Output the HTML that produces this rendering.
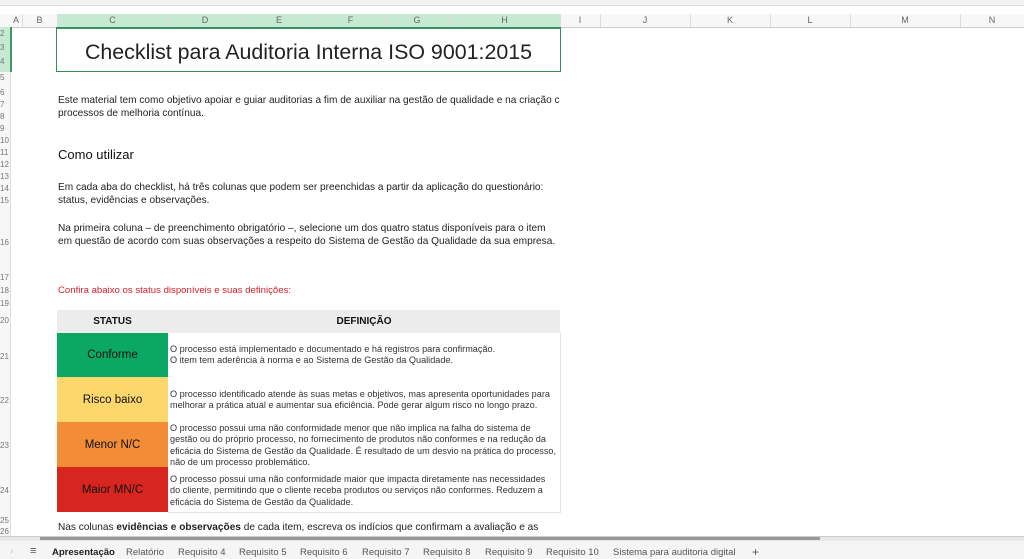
<html><head><style>
body{margin:0;width:1024px;height:559px;overflow:hidden;background:#fff;font-family:"Liberation Sans",sans-serif;position:relative}
.a{position:absolute;white-space:nowrap}
.ch{position:absolute;top:14px;height:13px;font-size:9px;color:#666;text-align:center;line-height:13px;border-right:1px solid #ddd}
.rn{position:absolute;left:0;width:9px;font-size:8px;color:#777;line-height:10px}
.t{font-size:10.1px;color:#222}
.d{font-size:9.15px;color:#333;line-height:11.3px;position:absolute;left:170px;white-space:nowrap}
.s{position:absolute;left:57px;width:111px;font-size:11.5px;color:#111;display:flex;align-items:center;justify-content:center}
.tab{font-size:9.5px;color:#555}
</style></head><body>
<div class="a" style="left:0;top:0;width:1024px;height:5px;background:#f3f3f3;border-bottom:1px solid #ddd"></div>
<div class="a" style="left:0;top:14px;width:1024px;height:13px;background:#f7f7f7;border-bottom:1px solid #ccc"></div>
<div class="a" style="left:57px;top:14px;width:503px;height:13px;background:#c6e9d2;border-bottom:2px solid #3a9a5f"></div>
<div class="ch" style="left:10px;width:12px">A</div><div class="ch" style="left:22px;width:35px">B</div>
<div class="ch" style="left:57px;width:111px">C</div><div class="ch" style="left:168px;width:74px">D</div>
<div class="ch" style="left:242px;width:74px">E</div><div class="ch" style="left:316px;width:69px">F</div>
<div class="ch" style="left:385px;width:64px">G</div><div class="ch" style="left:449px;width:111px">H</div>
<div class="ch" style="left:560px;width:40px">I</div><div class="ch" style="left:600px;width:90px">J</div>
<div class="ch" style="left:690px;width:80px">K</div><div class="ch" style="left:770px;width:80px">L</div>
<div class="ch" style="left:850px;width:110px">M</div><div class="ch" style="left:960px;width:64px">N</div>
<div class="a" style="left:0;top:27px;width:10px;height:510px;background:#f7f7f7;border-right:1px solid #ddd"></div>
<div class="a" style="left:0;top:27px;width:10px;height:45px;background:#c6e9d2;border-right:2px solid #3a9a5f"></div>
<div class="rn" style="top:29px">2</div><div class="rn" style="top:43px">3</div><div class="rn" style="top:57px">4</div><div class="rn" style="top:73px">5</div><div class="rn" style="top:88px">6</div><div class="rn" style="top:100px">7</div><div class="rn" style="top:112px">8</div><div class="rn" style="top:124px">9</div><div class="rn" style="top:136px">10</div><div class="rn" style="top:148px">11</div><div class="rn" style="top:160px">12</div><div class="rn" style="top:172px">13</div><div class="rn" style="top:184px">14</div><div class="rn" style="top:196px">15</div><div class="rn" style="top:238px">16</div><div class="rn" style="top:273px">17</div><div class="rn" style="top:286px">18</div><div class="rn" style="top:299px">19</div><div class="rn" style="top:316px">20</div><div class="rn" style="top:352px">21</div><div class="rn" style="top:396px">22</div><div class="rn" style="top:441px">23</div><div class="rn" style="top:486px">24</div><div class="rn" style="top:516px">25</div><div class="rn" style="top:527px">26</div>
<div class="a" style="left:56px;top:27px;width:503px;height:43px;border:1.5px solid #3a8a5f"></div>
<div class="a" style="left:57px;top:40px;width:503px;text-align:center;font-size:21.4px;color:#222">Checklist para Auditoria Interna ISO 9001:2015</div>
<div class="a t" style="left:58px;top:95px">Este material tem como objetivo apoiar e guiar auditorias a fim de auxiliar na gestão de qualidade e na criação c</div>
<div class="a t" style="left:58px;top:108px">processos de melhoria contínua.</div>
<div class="a" style="left:58px;top:147px;font-size:13px;color:#111">Como utilizar</div>
<div class="a t" style="left:58px;top:182px">Em cada aba do checklist, há três colunas que podem ser preenchidas a partir da aplicação do questionário:</div>
<div class="a t" style="left:58px;top:195px">status, evidências e observações.</div>
<div class="a t" style="left:58px;top:223px">Na primeira coluna – de preenchimento obrigatório –, selecione um dos quatro status disponíveis para o item</div>
<div class="a t" style="left:58px;top:236px">em questão de acordo com suas observações a respeito do Sistema de Gestão da Qualidade da sua empresa.</div>
<div class="a" style="left:58px;top:285px;font-size:9.6px;color:#d4202a">Confira abaixo os status disponíveis e suas definições:</div>
<div class="a" style="left:57px;top:310px;width:503px;height:23px;background:#ececec"></div>
<div class="a" style="left:57px;top:316px;width:111px;text-align:center;font-size:10px;font-weight:bold;color:#111">STATUS</div>
<div class="a" style="left:168px;top:316px;width:392px;text-align:center;font-size:10px;font-weight:bold;color:#111">DEFINIÇÃO</div>
<div class="a" style="left:168px;top:333px;width:392px;height:179px;border-right:1px solid #e5e5e5;border-bottom:1px solid #e5e5e5"></div>
<div class="s" style="top:333px;height:44px;background:#0aa862">Conforme</div>
<div class="s" style="top:377px;height:45px;background:#fcd76b">Risco baixo</div>
<div class="s" style="top:422px;height:45px;background:#f28c36">Menor N/C</div>
<div class="s" style="top:467px;height:45px;background:#d9251f">Maior MN/C</div>
<div class="d" style="top:344px">O processo está implementado e documentado e há registros para confirmação.<br>O item tem aderência à norma e ao Sistema de Gestão da Qualidade.</div>
<div class="d" style="top:389px">O processo identificado atende às suas metas e objetivos, mas apresenta oportunidades para<br>melhorar a prática atual e aumentar sua eficiência. Pode gerar algum risco no longo prazo.</div>
<div class="d" style="top:423px">O processo possui uma não conformidade menor que não implica na falha do sistema de<br>gestão ou do próprio processo, no fornecimento de produtos não conformes e na redução da<br>eficácia do Sistema de Gestão da Qualidade. É resultado de um desvio na prática do processo,<br>não de um processo problemático.</div>
<div class="d" style="top:474px">O processo possui uma não conformidade maior que impacta diretamente nas necessidades<br>do cliente, permitindo que o cliente receba produtos ou serviços não conformes. Reduzem a<br>eficácia do Sistema de Gestão da Qualidade.</div>
<div class="a t" style="left:58px;top:522px">Nas colunas <b>evidências e observações</b> de cada item, escreva os indícios que confirmam a avaliação e as</div>
<div class="a" style="left:0;top:536px;width:1024px;height:5px;background:#e8e8e8;border-top:1px solid #ccc"></div>
<div class="a" style="left:40px;top:537px;width:780px;height:3px;background:#999"></div>
<div class="a" style="left:0;top:541px;width:1024px;height:18px;background:#f5f5f5"></div>
<div class="a tab" style="left:10px;top:546px;color:#bbb">›</div>
<div class="a tab" style="left:30px;top:545px;font-size:11px">≡</div>
<div class="a tab" style="left:52px;top:547px;color:#222;font-weight:bold">Apresentação</div>
<div class="a tab" style="left:126px;top:547px">Relatório</div>
<div class="a tab" style="left:178px;top:547px">Requisito 4</div>
<div class="a tab" style="left:239px;top:547px">Requisito 5</div>
<div class="a tab" style="left:300px;top:547px">Requisito 6</div>
<div class="a tab" style="left:362px;top:547px">Requisito 7</div>
<div class="a tab" style="left:423px;top:547px">Requisito 8</div>
<div class="a tab" style="left:485px;top:547px">Requisito 9</div>
<div class="a tab" style="left:546px;top:547px">Requisito 10</div>
<div class="a tab" style="left:613px;top:547px">Sistema para auditoria digital</div>
<div class="a tab" style="left:752px;top:545px;font-size:12px">+</div>
</body></html>
